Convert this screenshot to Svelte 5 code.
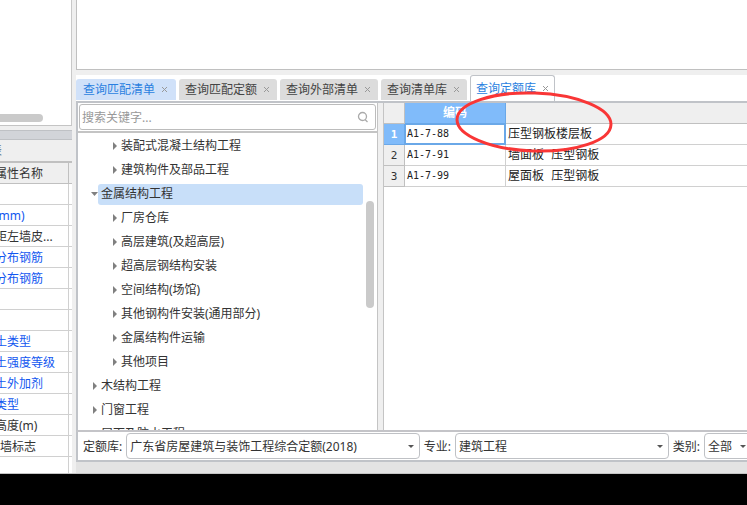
<script>
    let keyword = $state('');
    let activeTab = $state('quotaLib');
    let selectedNode = $state('金属结构工程');
    let selectedCode = $state('A1-7-88');

    const properties = [
        { name: '' },
        { name: '(mm)', link: true },
        { name: '距左墙皮...' },
        { name: '分布钢筋', link: true },
        { name: '分布钢筋', link: true },
        { name: '' },
        { name: '' },
        { name: '土类型', link: true },
        { name: '土强度等级', link: true },
        { name: '土外加剂', link: true },
        { name: '类型', link: true },
        { name: '高度(m)' },
        { name: '墙标志', nested: true },
        { name: '' },
    ];

    const tabs = [
        { id: 'matchList', label: '查询匹配清单', hot: true },
        { id: 'matchQuota', label: '查询匹配定额' },
        { id: 'external', label: '查询外部清单' },
        { id: 'listLib', label: '查询清单库' },
        { id: 'quotaLib', label: '查询定额库' },
    ];

    const nodes = [
        { label: '装配式混凝土结构工程', level: 1 },
        { label: '建筑构件及部品工程', level: 1 },
        { label: '金属结构工程', level: 0, open: true },
        { label: '厂房仓库', level: 1 },
        { label: '高层建筑(及超高层)', level: 1 },
        { label: '超高层钢结构安装', level: 1 },
        { label: '空间结构(场馆)', level: 1 },
        { label: '其他钢构件安装(通用部分)', level: 1 },
        { label: '金属结构件运输', level: 1 },
        { label: '其他项目', level: 1 },
        { label: '木结构工程', level: 0 },
        { label: '门窗工程', level: 0 },
        { label: '屋面及防水工程', level: 0 },
    ];

    const quotas = [
        { code: 'A1-7-88', name: '压型钢板楼层板' },
        { code: 'A1-7-91', name: '墙面板 压型钢板' },
        { code: 'A1-7-99', name: '屋面板 压型钢板' },
    ];
</script>

<div class="screen">
    <div class="app">
        <aside class="side">
            <div class="side-top">
                <div class="h-thumb"></div>
            </div>
            <section class="props">
                <div class="dock-bar"></div>
                <div class="dock-tab"><span>表</span></div>
                <table class="prop-table">
                    <thead>
                        <tr><th><span>属性名称</span></th><th class="rest"></th></tr>
                    </thead>
                    <tbody>
                        {#each properties as prop}
                            <tr>
                                <td class:link={prop.link} class:nested={prop.nested}><span>{prop.name}</span></td>
                                <td class="rest"></td>
                            </tr>
                        {/each}
                    </tbody>
                </table>
            </section>
        </aside>

        <main class="main">
            <div class="canvas"></div>

            <section class="query">
                <div class="tabs">
                    {#each tabs as tab (tab.id)}
                        <button
                            type="button"
                            class="tab"
                            class:hot={tab.hot}
                            class:active={activeTab === tab.id}
                            onclick={() => (activeTab = tab.id)}
                        >
                            {tab.label}
                            <svg class="close" viewBox="0 0 7 7" aria-hidden="true">
                                <path d="M1 1l5 5M6 1l-5 5" />
                            </svg>
                        </button>
                    {/each}
                </div>

                <div class="panes">
                    <div class="tree-pane">
                        <div class="search">
                            <input type="text" aria-label="搜索关键字" placeholder="搜索关键字..." bind:value={keyword} />
                            <svg viewBox="0 0 12 12" aria-hidden="true">
                                <circle cx="5.500" cy="5.500" r="4" />
                                <path d="M8 8.500l2.500 2.500" />
                            </svg>
                        </div>
                        <div class="tree">
                            {#each nodes as node}
                                <div class="node" class:child={node.level === 1}>
                                    <svg class="arrow" viewBox="0 0 7 8" aria-hidden="true">
                                        {#if node.open}
                                            <path d="M0 2h7L3.500 6z" />
                                        {:else}
                                            <path d="M2 0v8l4-4z" />
                                        {/if}
                                    </svg>
                                    <button
                                        type="button"
                                        class:selected={selectedNode === node.label}
                                        onclick={() => (selectedNode = node.label)}
                                    >{node.label}</button>
                                </div>
                            {/each}
                            <div class="v-thumb"></div>
                        </div>
                    </div>

                    <div class="grid-pane">
                        <table class="grid">
                            <thead>
                                <tr>
                                    <th class="num"></th>
                                    <th class="code">编码</th>
                                    <th></th>
                                </tr>
                            </thead>
                            <tbody>
                                {#each quotas as quota, index (quota.code)}
                                    <tr
                                        class:current={selectedCode === quota.code}
                                        onclick={() => (selectedCode = quota.code)}
                                    >
                                        <th class="num">{index + 1}</th>
                                        <td class="code">{quota.code}</td>
                                        <td>{quota.name}</td>
                                    </tr>
                                {/each}
                            </tbody>
                        </table>
                        <svg class="mark" viewBox="0 0 158 64" aria-hidden="true">
                            <ellipse cx="79" cy="32" rx="77" ry="29" transform="rotate(2 79 32)" />
                        </svg>
                    </div>
                </div>

                <div class="filters">
                    <label for="lib">定额库:</label>
                    <div class="select lib">
                        <select id="lib"><option>广东省房屋建筑与装饰工程综合定额(2018)</option></select>
                    </div>
                    <label for="major">专业:</label>
                    <div class="select major">
                        <select id="major"><option>建筑工程</option></select>
                    </div>
                    <label for="kind">类别:</label>
                    <div class="select kind">
                        <select id="kind"><option>全部</option></select>
                    </div>
                </div>
            </section>
            <div class="status"></div>
        </main>
    </div>
    <div class="letterbox"></div>
</div>

<style>
    :global(body) {
        margin: 0;
    }

    .screen {
        display: flex;
        flex-direction: column;
        height: 100vh;
        overflow: hidden;
        font-family: "Noto Sans", "Noto Sans CJK SC", sans-serif;
        font-size: 12px;
        line-height: 20px;
        color: #333;
        background: #efefef;
    }

    .screen * {
        box-sizing: border-box;
    }

    button,
    input,
    select {
        font: inherit;
        color: inherit;
    }

    .app {
        flex: 1;
        min-height: 0;
        display: flex;
        gap: 4px;
        border-bottom: 1px solid #c4c4c4;
    }

    .letterbox {
        flex: 0 0 31px;
        background: #000;
    }

    .side {
        flex: 0 0 72px;
        display: flex;
        flex-direction: column;
        gap: 4px;
        overflow: hidden;
    }

    .side-top {
        flex: 0 0 126px;
        display: flex;
        align-items: flex-end;
        padding-bottom: 3px;
        background: #fff;
        border-right: 1px solid #c8c8c8;
        border-bottom: 1px solid #c4c4c4;
    }

    .h-thumb {
        width: 43px;
        height: 8px;
        background: #cacaca;
        border-radius: 0 4px 4px 0;
    }

    .props {
        flex: 1;
        min-height: 0;
        overflow: hidden;
        background: #fff;
    }

    .dock-bar {
        height: 10px;
        background: #d2d4d9;
        border-top: 1px solid #bfc1c5;
        border-bottom: 1px solid #bfc1c5;
    }

    .dock-tab {
        height: 23px;
        padding-top: 1px;
        background: #efefef;
        border-bottom: 2px solid #c0c0c0;
        color: #5b7186;
    }

    .dock-tab span {
        margin-left: -10px;
    }

    .prop-table {
        width: 100%;
        border-collapse: separate;
        border-spacing: 0;
        table-layout: fixed;
    }

    .prop-table th,
    .prop-table td {
        height: 21px;
        padding: 2px 0 0;
        line-height: 18px;
        font-weight: 400;
        text-align: left;
        white-space: nowrap;
        border-right: 1px solid #d0d0d0;
        border-bottom: 1px solid #d0d0d0;
    }

    .prop-table th {
        background: #efefef;
        border-color: #c0c0c0;
    }

    .prop-table .rest {
        width: 3px;
        border-right: 0;
    }

    .prop-table span {
        margin-left: -5px;
    }

    .prop-table .nested span {
        margin-left: 0;
    }

    .prop-table .link {
        color: #1257f0;
    }

    .main {
        flex: 1;
        min-width: 0;
        display: flex;
        flex-direction: column;
    }

    .canvas {
        flex: 0 0 70px;
        margin-bottom: 5px;
        background: #fff;
        border-left: 1px solid #c0c0c0;
        border-bottom: 1px solid #c0c0c0;
    }

    .query {
        flex: 1;
        min-height: 0;
        display: flex;
        flex-direction: column;
        background: #fff;
    }

    .tabs {
        display: flex;
        align-items: flex-end;
        gap: 3px;
        height: 26px;
    }

    .tab {
        display: flex;
        align-items: center;
        gap: 6px;
        height: 21px;
        margin-bottom: 1px;
        padding: 0 7px 0 6px;
        line-height: 20px;
        white-space: nowrap;
        color: #444;
        background: #dcdcdc;
        border: 0;
        border-radius: 3px 3px 0 0;
    }

    .tab.hot {
        padding: 0 8px 0 7px;
        color: #2a7fe0;
        background: #d0e1f9;
    }

    .tab.active {
        height: 26px;
        margin-bottom: 0;
        padding: 0 5px;
        color: #2a7fe0;
        background: #fff;
        border: 1px solid #c0c3c8;
        border-bottom: 0;
    }

    .close {
        width: 7px;
        height: 7px;
        stroke: #999;
        fill: none;
    }

    .panes {
        flex: 1;
        min-height: 0;
        display: flex;
        gap: 5px;
        background: #efefef;
        border-top: 2px solid #c0c3c8;
        border-bottom: 2px solid #c4c4c8;
        border-left: 2px solid #c0c3c8;
    }

    .tree-pane {
        flex: 0 0 300px;
        display: flex;
        flex-direction: column;
        min-height: 0;
        background: #fff;
        border-right: 1px solid #c4c4c4;
    }

    .search {
        position: relative;
        display: flex;
        padding: 1px;
        border-bottom: 2px solid #c4c4c4;
    }

    .search input {
        flex: 1;
        min-width: 0;
        height: 26px;
        padding: 0 24px 0 2px;
        border: 1px solid #bcbcbc;
        border-radius: 3px;
        outline: none;
    }

    .search input::placeholder {
        color: #999;
    }

    .search svg {
        position: absolute;
        right: 8px;
        top: 8px;
        width: 12px;
        height: 12px;
        fill: none;
        stroke: #aaa;
        stroke-width: 1.3;
    }

    .tree {
        position: relative;
        flex: 1;
        min-height: 0;
        overflow: hidden;
        padding: 1px 14px 0 0;
    }

    .node {
        display: flex;
        align-items: center;
        height: 24px;
        padding-left: 13px;
    }

    .node.child {
        padding-left: 33px;
    }

    .node button {
        flex: 1;
        height: 21px;
        padding: 0 3px;
        line-height: 20px;
        text-align: left;
        white-space: nowrap;
        background: none;
        border: 0;
        border-radius: 3px;
    }

    .node button.selected {
        background: #c8dff9;
    }

    .arrow {
        width: 7px;
        height: 8px;
        fill: #808080;
    }

    .v-thumb {
        position: absolute;
        right: 3px;
        top: 68px;
        width: 8px;
        height: 107px;
        background: #cacaca;
        border-radius: 4px;
    }

    .grid-pane {
        position: relative;
        flex: 1;
        min-width: 0;
        background: #fff;
        border-left: 1px solid #c4c4c4;
    }

    .grid {
        width: 100%;
        border-collapse: separate;
        border-spacing: 0;
        table-layout: fixed;
    }

    .grid th,
    .grid td {
        height: 21px;
        padding: 0 2px;
        line-height: 18px;
        text-align: left;
        white-space: nowrap;
        border-right: 1px solid #d0d0d0;
        border-bottom: 1px solid #d0d0d0;
    }

    .grid td {
        color: #222;
        font-family: "DejaVu Sans Mono", "Noto Sans CJK SC", monospace;
    }

    .grid th {
        background: #efefef;
        border-color: #c0c0c0;
    }

    .grid th:last-child,
    .grid td:last-child {
        border-right: 0;
    }

    .grid .num {
        width: 21px;
        padding: 2px 0 0;
        text-align: center;
        font-family: "DejaVu Sans Mono", monospace;
        font-size: 11px;
        font-weight: 400;
    }

    .grid .code {
        width: 101px;
    }

    .grid td.code {
        font-size: 10px;
    }

    .grid th.code {
        text-align: center;
        color: #fff;
        background: #80bbfa;
        border-color: #6aa8e8;
    }

    .grid .current .num {
        color: #fff;
        font-weight: 700;
        background: #80bbfa;
        border-color: #6aa8e8;
    }

    .grid .current .code {
        box-shadow: inset 0 0 0 1px #6aa8e8;
        border-color: #6aa8e8;
    }

    .mark {
        position: absolute;
        left: 71px;
        top: -13px;
        width: 158px;
        height: 64px;
        fill: none;
        stroke: #f93636;
        stroke-width: 3;
        pointer-events: none;
    }

    .filters {
        display: flex;
        align-items: center;
        height: 30px;
        padding-left: 5px;
        overflow: hidden;
        white-space: nowrap;
        border-left: 2px solid #c0c3c8;
        border-bottom: 2px solid #c0c3c8;
    }

    .filters label {
        flex: none;
        margin-right: 4px;
        padding-top: 2px;
    }

    .select {
        position: relative;
        height: 26px;
        margin-right: 4px;
    }

    .select::after {
        content: "";
        position: absolute;
        right: 6px;
        top: 12px;
        border: 3px solid transparent;
        border-top-color: #555;
        border-bottom: 0;
        pointer-events: none;
    }

    .select select {
        appearance: none;
        width: 100%;
        height: 100%;
        padding: 2px 14px 0 3px;
        background: #fff;
        border: 1px solid #bfc1c5;
        border-radius: 4px;
    }

    .lib {
        flex: 294 1 0;
    }

    .major {
        flex: 214 1 0;
    }

    .kind {
        flex: 0 0 48px;
        margin-right: -5px;
    }

    .status {
        flex: 0 0 11px;
        background: #e3e3e3;
    }
</style>
